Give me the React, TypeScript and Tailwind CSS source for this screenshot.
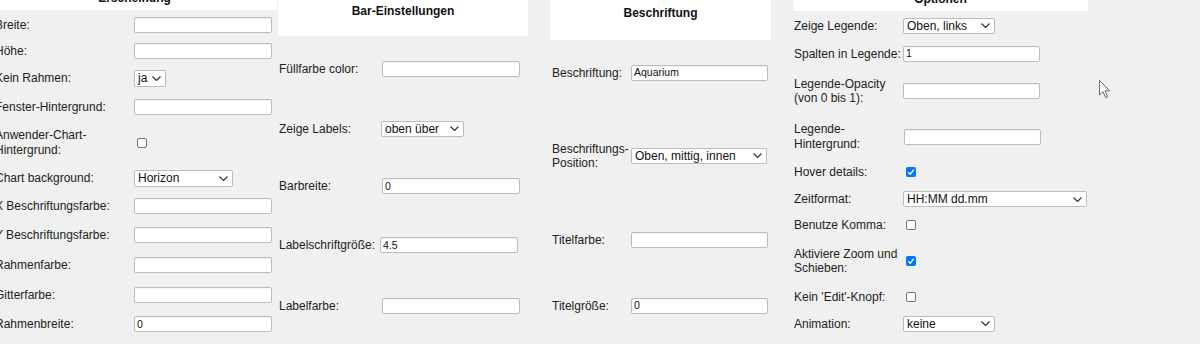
import React from "react";

const Chevron = () => (
  <svg width="9" height="5" viewBox="0 0 9 5" className="shrink-0">
    <polyline points="0.5,0.5 4.5,4.5 8.5,0.5" fill="none" stroke="#333" strokeWidth="1.2" />
  </svg>
);

const Inp = ({ value = "", cls = "" }: { value?: string; cls?: string }) => (
  <div
    className={
      "h-[16px] bg-white border border-[#bcbcbc] rounded-[2px] flex items-center pl-[2px] text-[10.5px] leading-none text-[#111] shadow-[inset_0_1px_0_rgba(0,0,0,0.04)] " +
      cls
    }
  >
    {value}
  </div>
);

const Sel = ({ value, cls = "" }: { value: string; cls?: string }) => (
  <div
    className={
      "h-[16px] bg-white border border-[#bcbcbc] rounded-[2px] flex items-center justify-between pl-[3px] pr-[4px] text-[12px] leading-none text-[#111] " +
      cls
    }
  >
    <span className="whitespace-nowrap">{value}</span>
    <Chevron />
  </div>
);

const Box = ({ checked = false, cls = "" }: { checked?: boolean; cls?: string }) =>
  checked ? (
    <div className={"w-[10px] h-[10px] rounded-[2px] bg-[#0075ff] flex items-center justify-center " + cls}>
      <svg width="8" height="8" viewBox="0 0 8 8">
        <polyline points="1.2,4.2 3.2,6.2 6.8,1.8" fill="none" stroke="#fff" strokeWidth="1.4" />
      </svg>
    </div>
  ) : (
    <div className={"w-[10px] h-[10px] rounded-[2px] bg-white border border-[#767676] " + cls} />
  );

export default function App() {
  return (
    <div className="relative w-[1200px] h-[344px] overflow-hidden bg-[#f0f0f0] flex items-start font-['Liberation_Sans',Arial,sans-serif] text-[12px] text-[#222]">
      {/* Column 1: Erscheinung */}
      <div className="ml-[-8px] w-[285px] flex flex-col shrink-0">
        <div className="h-[10px] bg-white overflow-hidden">
          <div className="mt-[-9px] leading-[15px] text-center font-bold text-[12px] text-[#111]">Erscheinung</div>
        </div>
        <div className="flex items-center h-[29px]">
          <div className="w-[142px] pl-[3px] whitespace-nowrap">Breite:</div>
          <Inp cls="w-[138px]" />
        </div>
        <div className="flex items-center h-[23px]">
          <div className="w-[142px] pl-[3px] whitespace-nowrap">Höhe:</div>
          <Inp cls="w-[138px]" />
        </div>
        <div className="flex items-center h-[32px]">
          <div className="w-[142px] pl-[3px] whitespace-nowrap">Kein Rahmen:</div>
          <Sel value="ja" cls="w-[32px] h-[17px]" />
        </div>
        <div className="flex items-center h-[25px]">
          <div className="w-[142px] pl-[3px] whitespace-nowrap">Fenster-Hintergrund:</div>
          <Inp cls="w-[138px]" />
        </div>
        <div className="flex items-center h-[48px]">
          <div className="w-[142px] pl-[3px] whitespace-nowrap leading-[15px]">
            Anwender-Chart-
            <br />
            Hintergrund:
          </div>
          <Box cls="ml-[3px]" />
        </div>
        <div className="flex items-center h-[22px]">
          <div className="w-[142px] pl-[3px] whitespace-nowrap">Chart background:</div>
          <Sel value="Horizon" cls="w-[99px] h-[17px]" />
        </div>
        <div className="flex items-center h-[34px]">
          <div className="w-[142px] pl-[3px] whitespace-nowrap">X Beschriftungsfarbe:</div>
          <Inp cls="w-[138px]" />
        </div>
        <div className="flex items-center h-[24px]">
          <div className="w-[142px] pl-[3px] whitespace-nowrap">Y Beschriftungsfarbe:</div>
          <Inp cls="w-[138px]" />
        </div>
        <div className="flex items-center h-[36px]">
          <div className="w-[142px] pl-[3px] whitespace-nowrap">Rahmenfarbe:</div>
          <Inp cls="w-[138px]" />
        </div>
        <div className="flex items-center h-[24px]">
          <div className="w-[142px] pl-[3px] whitespace-nowrap">Gitterfarbe:</div>
          <Inp cls="w-[138px]" />
        </div>
        <div className="flex items-center h-[34px]">
          <div className="w-[142px] pl-[3px] whitespace-nowrap">Rahmenbreite:</div>
          <Inp value="0" cls="w-[138px]" />
        </div>
      </div>

      {/* Column 2: Bar-Einstellungen */}
      <div className="ml-[1px] w-[250px] flex flex-col shrink-0">
        <div className="h-[36px] bg-white pt-[4px]">
          <div className="leading-[15px] text-center font-bold text-[12px] text-[#111]">Bar-Einstellungen</div>
        </div>
        <div className="flex items-center h-[66px]">
          <div className="w-[104px] pl-[1px] whitespace-nowrap">Füllfarbe color:</div>
          <Inp cls="w-[138px]" />
        </div>
        <div className="flex items-center h-[53px]">
          <div className="w-[104px] pl-[1px] whitespace-nowrap">Zeige Labels:</div>
          <Sel value="oben über" cls="w-[83px] ml-[-1px]" />
        </div>
        <div className="flex items-center h-[62px]">
          <div className="w-[104px] pl-[1px] whitespace-nowrap">Barbreite:</div>
          <Inp value="0" cls="w-[138px]" />
        </div>
        <div className="flex items-center h-[56px]">
          <div className="w-[104px] pl-[1px] whitespace-nowrap">Labelschriftgröße:</div>
          <Inp value="4.5" cls="w-[138px] ml-[-2px]" />
        </div>
        <div className="flex items-center h-[65px]">
          <div className="w-[104px] pl-[1px] whitespace-nowrap">Labelfarbe:</div>
          <Inp cls="w-[138px]" />
        </div>
      </div>

      {/* Column 3: Beschriftung */}
      <div className="ml-[22px] w-[221px] flex flex-col shrink-0">
        <div className="h-[40px] bg-white pt-[6px]">
          <div className="leading-[15px] text-center font-bold text-[12px] text-[#111]">Beschriftung</div>
        </div>
        <div className="flex items-center h-[65px]">
          <div className="w-[81px] pl-[2px] whitespace-nowrap">Beschriftung:</div>
          <Inp value="Aquarium" cls="w-[137px]" />
        </div>
        <div className="flex items-center h-[101px]">
          <div className="w-[81px] pl-[2px] whitespace-nowrap leading-[14px]">
            Beschriftungs-
            <br />
            Position:
          </div>
          <Sel value="Oben, mittig, innen" cls="w-[136px]" />
        </div>
        <div className="flex items-center h-[68px]">
          <div className="w-[81px] pl-[2px] whitespace-nowrap">Titelfarbe:</div>
          <Inp cls="w-[137px]" />
        </div>
        <div className="flex items-center h-[63px]">
          <div className="w-[81px] pl-[2px] whitespace-nowrap">Titelgröße:</div>
          <Inp value="0" cls="w-[137px]" />
        </div>
      </div>

      {/* Column 4: Optionen */}
      <div className="ml-[22px] w-[295px] flex flex-col shrink-0">
        <div className="h-[11px] bg-white overflow-hidden">
          <div className="mt-[-8px] leading-[15px] text-center font-bold text-[12px] text-[#111]">Optionen</div>
        </div>
        <div className="flex items-center h-[29px]">
          <div className="w-[110px] pl-[1px] whitespace-nowrap">Zeige Legende:</div>
          <Sel value="Oben, links" cls="w-[92px]" />
        </div>
        <div className="flex items-center h-[27px]">
          <div className="w-[110px] pl-[1px] whitespace-nowrap">Spalten in Legende:</div>
          <Inp value="1" cls="w-[137px]" />
        </div>
        <div className="flex items-center h-[48px]">
          <div className="w-[110px] pl-[1px] whitespace-nowrap leading-[14px]">
            Legende-Opacity
            <br />
            (von 0 bis 1):
          </div>
          <Inp cls="w-[137px]" />
        </div>
        <div className="flex items-center h-[44px]">
          <div className="w-[110px] pl-[1px] whitespace-nowrap leading-[15px]">
            Legende-
            <br />
            Hintergrund:
          </div>
          <Inp cls="w-[137px] ml-[1px]" />
        </div>
        <div className="flex items-center h-[25px]">
          <div className="w-[110px] pl-[1px] whitespace-nowrap">Hover details:</div>
          <Box checked cls="ml-[3px]" />
        </div>
        <div className="flex items-center h-[30px]">
          <div className="w-[110px] pl-[1px] whitespace-nowrap">Zeitformat:</div>
          <Sel value="HH:MM dd.mm" cls="w-[184px]" />
        </div>
        <div className="flex items-center h-[22px]">
          <div className="w-[110px] pl-[1px] whitespace-nowrap">Benutze Komma:</div>
          <Box cls="ml-[3px]" />
        </div>
        <div className="flex items-center h-[50px]">
          <div className="w-[110px] pl-[1px] whitespace-nowrap leading-[14px]">
            Aktiviere Zoom und
            <br />
            Schieben:
          </div>
          <Box checked cls="ml-[3px]" />
        </div>
        <div className="flex items-center h-[22px]">
          <div className="w-[110px] pl-[1px] whitespace-nowrap">Kein 'Edit'-Knopf:</div>
          <Box cls="ml-[3px]" />
        </div>
        <div className="flex items-center h-[31px]">
          <div className="w-[110px] pl-[1px] whitespace-nowrap">Animation:</div>
          <Sel value="keine" cls="w-[92px]" />
        </div>
      </div>

      {/* mouse cursor overlay */}
      <svg className="absolute left-[1098px] top-[79px]" width="14" height="21" viewBox="0 0 14 21">
        <path
          d="M1.5,1.5 L1.5,16 L5,12.6 L7.6,18.6 L9.6,17.7 L7.1,11.8 L11.8,11.8 Z"
          fill="#fff"
          stroke="#6b6b6b"
          strokeWidth="1"
          strokeLinejoin="round"
        />
      </svg>
    </div>
  );
}
